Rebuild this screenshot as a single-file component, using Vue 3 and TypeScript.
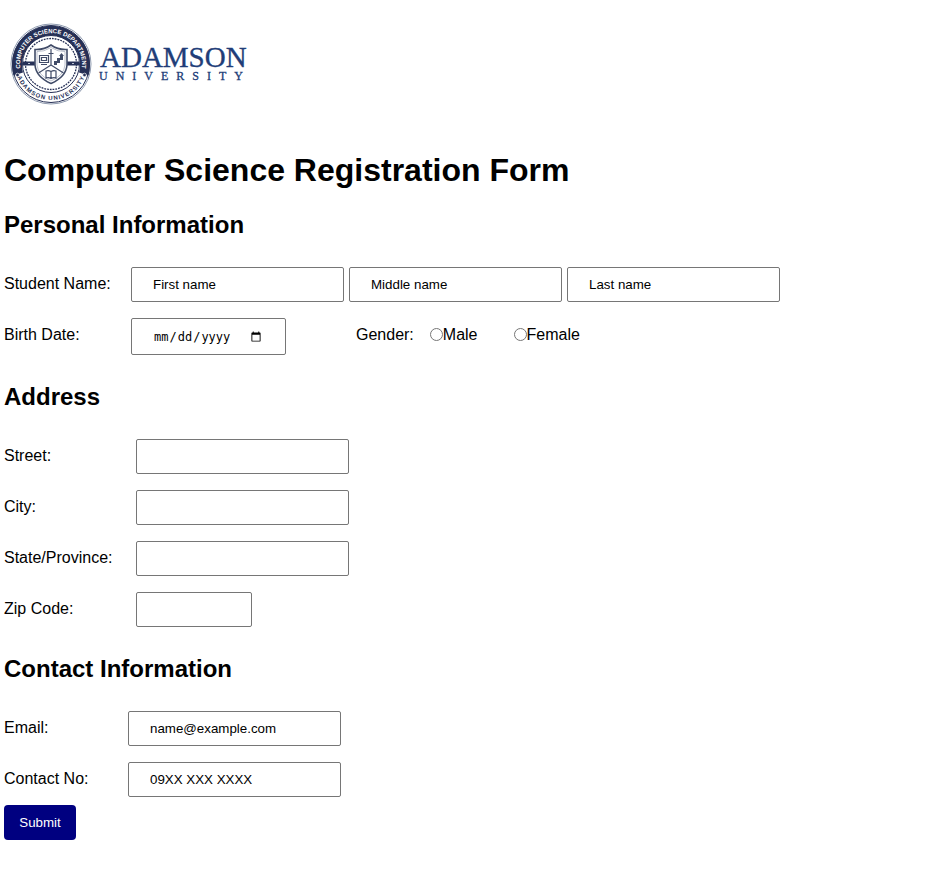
<script setup lang="ts">
import { reactive } from 'vue'

interface Field {
  id: string
  label: string
  type: string
  placeholder?: string
  short?: boolean
}

const nameFields: Field[] = [
  { id: 'firstName', label: 'First name', type: 'text', placeholder: 'First name' },
  { id: 'middleName', label: 'Middle name', type: 'text', placeholder: 'Middle name' },
  { id: 'lastName', label: 'Last name', type: 'text', placeholder: 'Last name' },
]

const addressFields: Field[] = [
  { id: 'street', label: 'Street:', type: 'text' },
  { id: 'city', label: 'City:', type: 'text' },
  { id: 'state', label: 'State/Province:', type: 'text' },
  { id: 'zip', label: 'Zip Code:', type: 'text', short: true },
]

const contactFields: Field[] = [
  { id: 'email', label: 'Email:', type: 'email', placeholder: 'name@example.com' },
  { id: 'phone', label: 'Contact No:', type: 'tel', placeholder: '09XX XXX XXXX' },
]

const form = reactive<Record<string, string>>({})
</script>

<template>
  <main class="page">
    <svg class="logo" viewBox="0 0 250 96" width="250" height="96" role="img" aria-label="Adamson University">
      <defs>
        <path id="arc-top" d="M20.700 64.500 A31 31 0 1 1 73.300 64.500" />
        <path id="arc-bottom" d="M11 48 A36 36 0 0 0 83 48" />
      </defs>
      <circle cx="47" cy="48" r="40" fill="#fff" stroke="#8f9bb0" stroke-width="1" />
      <path d="M9.500 59.500 A39 39 0 1 1 84.500 59.500 L75 56.500 A29 29 0 1 0 19 56.500 Z" fill="#263056" />
      <circle cx="47" cy="48" r="38.500" fill="none" stroke="#263056" stroke-width="1" />
      <circle cx="47" cy="48" r="28.500" fill="#fff" stroke="#263056" stroke-width="1" />
      <circle cx="47" cy="48" r="25.500" fill="none" stroke="#263056" stroke-width="1.300" stroke-dasharray="1.800 1" />
      <text class="seal-text" fill="#fff"><textPath href="#arc-top" startOffset="50%" text-anchor="middle">COMPUTER SCIENCE DEPARTMENT</textPath></text>
      <text class="seal-text seal-lower" fill="#263056"><textPath href="#arc-bottom" startOffset="50%" text-anchor="middle">ADAMSON UNIVERSITY</textPath></text>
      <circle cx="13.500" cy="59" r="1.800" fill="#263056" stroke="#fff" stroke-width=".7" />
      <circle cx="80.500" cy="59" r="1.800" fill="#263056" stroke="#fff" stroke-width=".7" />
      <path d="M19 45.500h12v4H19zM63 45.500h12v4H63z" fill="#263056" />
      <path d="M24 47.500h2M68 47.500h2" stroke="#bac1d0" stroke-width="1" />
      <path d="M47 29 Q54 34 63 33.500 V49 Q62 61 47 67.500 Q32 61 31 49 V33.500 Q40 34 47 29Z" fill="#fff" stroke="#414c68" stroke-width="1.600" />
      <path d="M47 31.500 Q54 36 61 35.500 V49 Q60 59.500 47 65 Q34 59.500 33 49 V35.500 Q40 36 47 31.500Z" fill="none" stroke="#8d96aa" stroke-width=".6" />
      <g fill="none" stroke="#414c68" stroke-width="1.200">
        <path d="M47 33V49M44.500 37.500h5M47 49L34.500 57M47 49L59.500 57" />
        <path d="M35.500 39.500h9v7h-9zM37.500 41.500h5v3h-5zM37 48.500h6" />
        <path d="M47 55.500Q44.500 54 42 55v7q2.500-1 5 .5q2.500-1.500 5-.5v-7q-2.500-1-5 .5v7" />
      </g>
      <path d="M50 49v-4h3v-3h3v-2h-1l2.500-3 2.500 3h-1v4h-3v3h-3v2z" fill="#414c68" />
      <text class="wordmark" x="96" y="51">ADAMSON</text>
      <text class="wordmark-sub" x="95" y="64">UNIVERSITY</text>
    </svg>

    <form @submit.prevent>
      <h1>Computer Science Registration Form</h1>

      <section class="personal">
        <h2>Personal Information</h2>
        <div class="rows">
          <div class="row">
            <label class="caption" for="firstName">Student Name:</label>
            <div class="names">
              <input
                v-for="field in nameFields" :id="field.id" :key="field.id" v-model="form[field.id]"
                class="box" :type="field.type" :placeholder="field.placeholder" :aria-label="field.label"
              >
            </div>
          </div>
          <div class="row">
            <label class="caption" for="birthDate">Birth Date:</label>
            <input id="birthDate" v-model="form.birthDate" class="box date" type="date">
            <div class="gender" role="radiogroup" aria-labelledby="genderLabel">
              <span id="genderLabel">Gender:</span>
              <label class="choice"><input v-model="form.gender" type="radio" name="gender" value="male">Male</label>
              <label class="choice"><input v-model="form.gender" type="radio" name="gender" value="female">Female</label>
            </div>
          </div>
        </div>
      </section>

      <section class="address">
        <h2>Address</h2>
        <div class="rows">
          <div v-for="field in addressFields" :key="field.id" class="row">
            <label class="caption" :for="field.id">{{ field.label }}</label>
            <input :id="field.id" v-model="form[field.id]" class="box" :class="{ short: field.short }" :type="field.type">
          </div>
        </div>
      </section>

      <section class="contact">
        <h2>Contact Information</h2>
        <div class="rows">
          <div v-for="field in contactFields" :key="field.id" class="row">
            <label class="caption" :for="field.id">{{ field.label }}</label>
            <input :id="field.id" v-model="form[field.id]" class="box" :type="field.type" :placeholder="field.placeholder">
          </div>
        </div>
      </section>

      <button class="submit" type="submit">Submit</button>
    </form>
  </main>
</template>

<style>
body {
  background: #fff;
}
</style>

<style scoped>
.page {
  padding: 16px 4px 48px;
  color: #000;
  font-family: "Liberation Sans", Arial, sans-serif;
  font-size: 16px;
  line-height: 18px;
}

.logo {
  display: block;
  margin-bottom: 40px;
}

.seal-text {
  font-family: "Liberation Sans", Arial, sans-serif;
  font-size: 6px;
  font-weight: 700;
}

.seal-lower {
  letter-spacing: 1px;
}

.wordmark {
  fill: #213d78;
  font-family: "Liberation Serif", "Times New Roman", serif;
  font-size: 29px;
  stroke: #213d78;
  stroke-width: 0.3px;
}

.wordmark-sub {
  fill: #213d78;
  font-family: "Liberation Serif", "Times New Roman", serif;
  font-size: 12px;
  letter-spacing: 8px;
  stroke: #213d78;
  stroke-width: 0.3px;
}

h1,
h2 {
  margin: 0;
  font-weight: 700;
}

h1 {
  font-size: 32px;
  line-height: 36px;
}

h2 {
  padding: 28px 0;
  font-size: 24px;
  line-height: 28px;
}

.personal h2 {
  padding-top: 23px;
}

.rows {
  display: flex;
  flex-direction: column;
  gap: 16px;
}

.row {
  display: flex;
  align-items: flex-start;
}

.caption,
.gender {
  padding-top: 8px;
}

.caption {
  flex: none;
  width: 127px;
}

.address .caption {
  width: 132px;
}

.contact .caption {
  width: 124px;
}

.names {
  display: flex;
  flex-wrap: wrap;
  gap: 5px;
}

.box {
  box-sizing: border-box;
  width: 213px;
  height: 35px;
  margin: 0;
  padding: 8px 21px;
  border: 1px solid #767676;
  border-radius: 2px;
  background: #fff;
  color: #000;
  font-family: "Liberation Sans", Arial, sans-serif;
}

.box::placeholder {
  color: #000;
}

.short {
  width: 116px;
}

.date {
  width: 155px;
  height: 37px;
  font-family: "DejaVu Sans Mono", monospace;
  font-size: 12px;
}

.gender {
  display: flex;
  padding-left: 70px;
}

.choice {
  display: flex;
  align-items: center;
  height: 18px;
  margin-left: 16px;
}

.choice + .choice {
  margin-left: 36px;
}

.choice input {
  width: 13px;
  height: 13px;
  margin: 0 0 2px;
}

.submit {
  min-width: 72px;
  height: 35px;
  margin-top: 8px;
  padding: 8px 15px;
  border: 0;
  border-radius: 4px;
  background: #000080;
  color: #fff;
  font-family: "Liberation Sans", Arial, sans-serif;
}
</style>
